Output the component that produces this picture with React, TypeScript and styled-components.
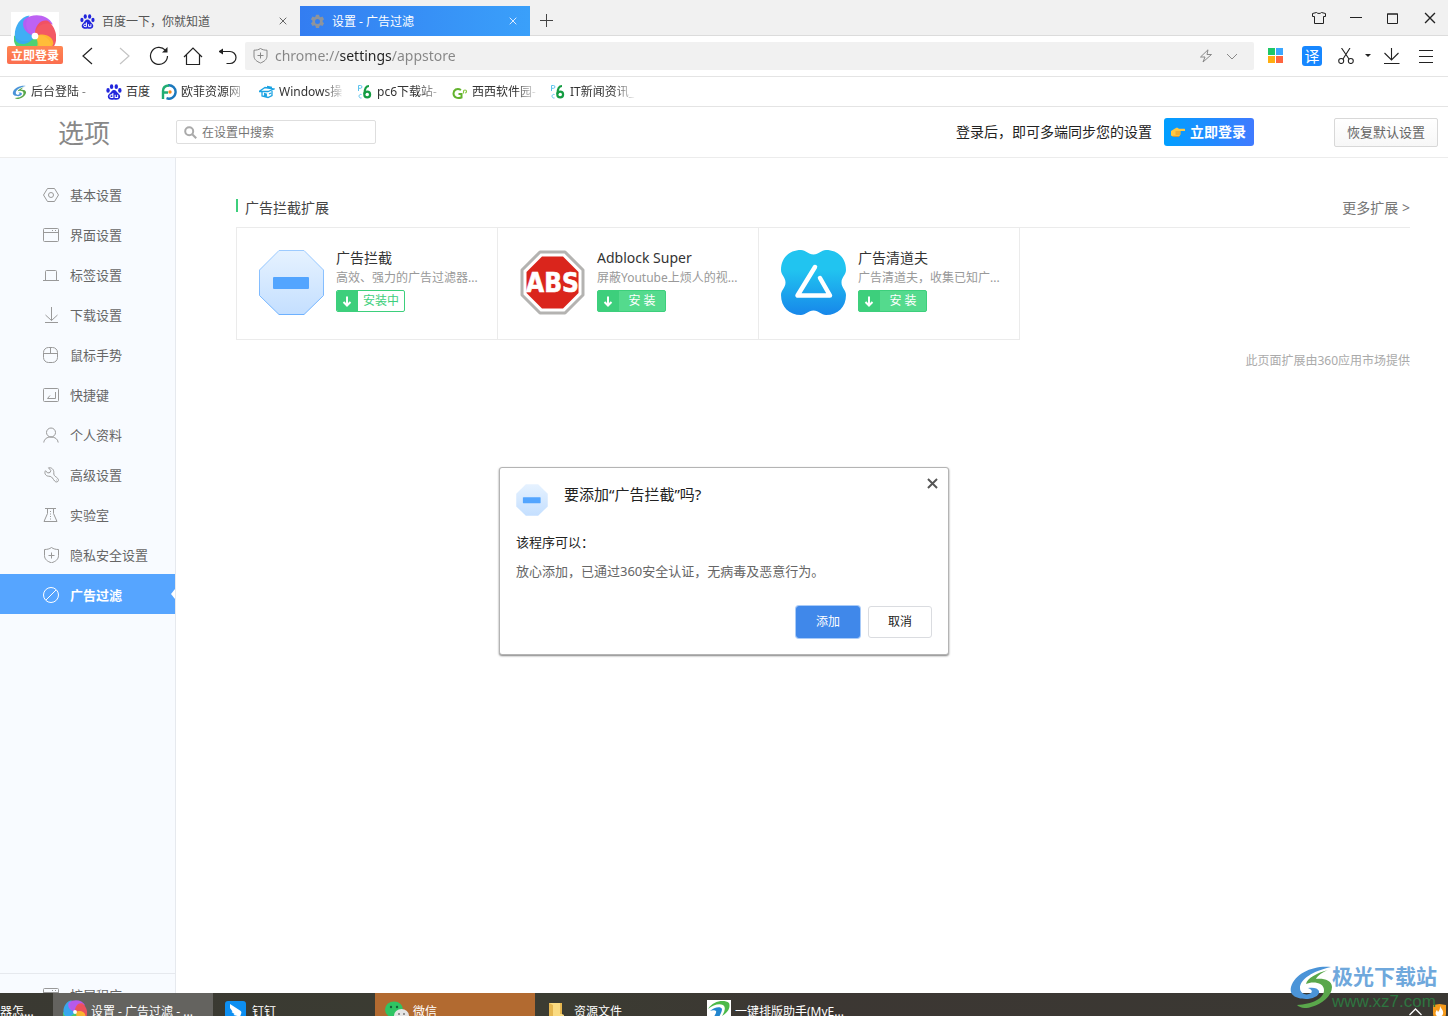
import React from "react";
import styled, { createGlobalStyle, css } from "styled-components";

const GlobalStyle = createGlobalStyle`
  *, *::before, *::after { box-sizing: border-box; }
  body {
    margin: 0;
    background: #fff;
    color: #333;
    font-family: "Noto Sans", "Noto Sans CJK SC", sans-serif;
    font-size: 12px;
    line-height: 20px;
  }
  button, input { font: inherit; color: inherit; margin: 0; padding: 0; border: 0; background: none; }
  button { cursor: pointer; white-space: nowrap; }
  a { color: inherit; text-decoration: none; }
  h1, h2, h3, p, ul { margin: 0; padding: 0; font-weight: 400; }
  ul { list-style: none; }
  svg { display: block; flex: none; }
`;

/* ---------- browser chrome ---------- */

const Desktop = styled.div`
  position: relative;
  display: flex;
  flex-direction: column;
  height: 100vh;
  overflow: hidden;
`;

const Account = styled.button`
  position: absolute;
  top: 12px;
  left: 7px;
  width: 56px;
  display: flex;
  flex-direction: column;
  align-items: center;
`;

const Portrait = styled.span`
  display: flex;
  justify-content: center;
  width: 48px;
  height: 34px;
  padding-top: 3px;
  overflow: hidden;
  background: #fff;
`;

const AccountLabel = styled.span`
  width: 100%;
  height: 18px;
  border-radius: 2px;
  background: linear-gradient(#ff8652, #fb6e4f);
  color: #fff;
  font-weight: 700;
  line-height: 19px;
`;

const TabStrip = styled.div`
  flex: none;
  display: flex;
  align-items: flex-end;
  height: 36px;
  padding-left: 70px;
  background: #f1f1f1;
  box-shadow: inset 0 -1px #dcdcdc;
`;

const Tab = styled.div<{ $active?: boolean }>`
  display: flex;
  align-items: center;
  width: 230px;
  height: 30px;
  padding: 0 11px 0 10px;
  gap: 7px;
  color: #555;
  ${(p) =>
    p.$active &&
    css`
      color: #fff;
      background: linear-gradient(90deg, #337df1, #3aa0fa);
    `}
`;

const TabTitle = styled.span`
  flex: 1;
  padding-top: 2px;
`;

const IconButton = styled.button<{ $w?: number; $color?: string }>`
  display: flex;
  align-items: center;
  justify-content: center;
  flex: none;
  width: ${(p) => p.$w ?? 34}px;
  height: 28px;
  color: ${(p) => p.$color ?? "#222"};
`;

const NewTab = styled(IconButton)`
  height: 32px;
`;

const WindowButtons = styled.div`
  display: flex;
  align-items: center;
  align-self: flex-start;
  height: 36px;
  margin-left: auto;
`;

const Toolbar = styled.div`
  flex: none;
  display: flex;
  align-items: center;
  height: 41px;
  padding: 0 8px 1px 70px;
  border-bottom: 1px solid #e4e4e4;
`;

const AddressBar = styled.div`
  flex: 1;
  display: flex;
  align-items: center;
  height: 28px;
  padding: 0 9px 0 8px;
  border-radius: 2px;
  background: #f1f1f1;
`;

const AddressInput = styled.input`
  flex: 1;
  min-width: 0;
  height: 28px;
  margin-left: 7px;
  font-size: 14px;
  outline: none;
  background: linear-gradient(90deg, #858585 64px, #222 64px, #222 117px, #858585 117px);
  background-clip: text;
  -webkit-background-clip: text;
  -webkit-text-fill-color: transparent;
`;

const Translate = styled.button`
  flex: none;
  width: 20px;
  height: 20px;
  margin: 0 7px 0 5px;
  border-radius: 3px;
  background: #1787ff;
  color: #fff;
  font-size: 15px;
  line-height: 20px;
`;

const Bookmarks = styled.nav`
  flex: none;
  display: flex;
  align-items: center;
  gap: 11px;
  height: 30px;
  padding-left: 11px;
  border-bottom: 1px solid #e4e4e4;
`;

const Bookmark = styled.a`
  display: flex;
  align-items: center;
  gap: 4px;
`;

const BookmarkText = styled.span<{ $w: number }>`
  width: ${(p) => p.$w}px;
  overflow: hidden;
  white-space: nowrap;
  color: #333;
  ${(p) =>
    p.$w > 30 &&
    css`
      mask-image: linear-gradient(90deg, #000 44px, transparent 66px);
    `}
`;

/* ---------- settings page ---------- */

const Header = styled.header`
  flex: none;
  display: flex;
  align-items: center;
  height: 51px;
  padding-right: 10px;
  border-bottom: 1px solid #ececec;
`;

const PageTitle = styled.h1`
  width: 176px;
  padding: 2px 0 0 58px;
  color: #888;
  font-size: 26px;
  line-height: 36px;
`;

const SearchBox = styled.label`
  display: flex;
  align-items: center;
  gap: 5px;
  width: 200px;
  height: 24px;
  padding: 0 7px;
  border: 1px solid #dedede;
  border-radius: 2px;
`;

const SearchInput = styled.input`
  flex: 1;
  min-width: 0;
  padding-top: 2px;
  outline: none;
  &::placeholder { color: #757575; opacity: 1; }
`;

const SyncHint = styled.p`
  margin-left: auto;
  color: #222;
  font-size: 14px;
`;

const LoginButton = styled.button`
  display: flex;
  align-items: center;
  gap: 5px;
  height: 28px;
  margin: 0 80px 0 12px;
  padding: 0 8px 0 7px;
  border-radius: 3px;
  background: linear-gradient(90deg, #009fff, #407aff);
  color: #fff;
  font-size: 14px;
  font-weight: 700;
`;

const ResetButton = styled.button`
  height: 29px;
  padding: 0 12px;
  border: 1px solid #d8d8d8;
  border-radius: 2px;
  background: linear-gradient(#fff, #f7f7f7);
  color: #666;
  font-size: 13px;
`;

const Body = styled.div`
  position: relative;
  flex: 1;
  display: flex;
  min-height: 0;
`;

const Sidebar = styled.nav`
  flex: none;
  display: flex;
  flex-direction: column;
  width: 176px;
  padding-top: 16px;
  border-right: 1px solid #e6e9ee;
  background: #f8fbff;
`;

const SideLink = styled.a<{ $active?: boolean }>`
  position: relative;
  display: flex;
  align-items: center;
  gap: 11px;
  height: 40px;
  padding: 2px 0 0 43px;
  color: #666;
  font-size: 13px;
  svg { color: #999; }
  ${(p) =>
    p.$active &&
    css`
      background: #56a5ff;
      color: #fff;
      font-weight: 700;
      svg { color: #fff; }
      &::after {
        content: "";
        position: absolute;
        top: 15px;
        right: 0;
        border: 5px solid transparent;
        border-left-width: 0;
        border-right: 4px solid #fff;
      }
    `}
`;

const SideFooter = styled.div`
  height: 20px;
  margin-top: auto;
  overflow: hidden;
  border-top: 1px solid #e6e9ee;
`;

const Main = styled.main`
  flex: 1;
  min-width: 0;
  padding: 40px 38px 0 60px;
`;

const SectionHead = styled.div`
  display: flex;
  align-items: flex-start;
  height: 29px;
  font-size: 14px;
  color: #444;
  &::before {
    content: "";
    width: 2px;
    height: 13px;
    margin: 1px 7px 0 0;
    background: #3dcf7c;
  }
`;

const SectionTitle = styled.h2`
  flex: 1;
  font-size: 14px;
`;

const MoreLink = styled.a`
  color: #777;
`;

const Cards = styled.ul`
  display: flex;
  border-top: 1px solid #ebebeb;
`;

const Card = styled.li`
  display: flex;
  gap: 12px;
  width: 261px;
  height: 112px;
  padding: 20px 0 0 22px;
  border: solid #ebebeb;
  border-width: 0 0 1px 1px;
  &:last-child { width: 262px; border-right-width: 1px; }
  > svg { margin-top: 2px; }
`;

const CardTitle = styled.h3`
  color: #333;
  font-size: 14px;
`;

const CardText = styled.p`
  color: #999;
  white-space: nowrap;
`;

const InstallButton = styled.button<{ $busy?: boolean }>`
  display: flex;
  width: 69px;
  height: 22px;
  margin-top: 2px;
  overflow: hidden;
  border: 1px solid #3dcf7c;
  border-radius: 2px;
  background: ${(p) => (p.$busy ? "#fff" : "#54da8d")};
  color: ${(p) => (p.$busy ? "#3dcf7c" : "#fff")};
  svg { background: #3dcf7c; }
`;

const InstallText = styled.span`
  flex: 1;
  text-align: center;
`;

const Source = styled.p`
  margin-top: 11px;
  color: #aaa;
  text-align: right;
`;

/* ---------- dialog ---------- */

const DialogLayer = styled.div`
  position: absolute;
  top: 309px;
  left: 0;
  right: 0;
  display: flex;
  justify-content: center;
`;

const DialogBox = styled.section`
  width: 450px;
  height: 188px;
  padding: 16px;
  border: 1px solid #b4b4b4;
  border-radius: 3px;
  background: #fff;
  box-shadow: 0 1px 2px rgba(0, 0, 0, 0.5);
`;

const DialogHead = styled.div`
  display: flex;
  gap: 16px;
  height: 48px;
`;

const DialogTitle = styled.h2`
  flex: 1;
  color: #222;
  font-size: 15px;
`;

const CloseButton = styled.button`
  display: flex;
  align-items: center;
  justify-content: center;
  width: 20px;
  height: 20px;
  margin: -11px -10px 0 0;
  color: #555;
`;

const DialogLead = styled.p`
  color: #222;
  font-size: 13px;
`;

const DialogText = styled.p`
  margin-top: 9px;
  color: #666;
  font-size: 13px;
`;

const DialogActions = styled.div`
  display: flex;
  justify-content: flex-end;
  gap: 8px;
  margin-top: 25px;
`;

const DialogButton = styled.button<{ $primary?: boolean }>`
  width: 64px;
  height: 32px;
  border: 1px solid ${(p) => (p.$primary ? "#4088ea" : "#dadce0")};
  border-radius: 3px;
  background: ${(p) => (p.$primary ? "#4088ea" : "#fff")};
  color: ${(p) => (p.$primary ? "#fff" : "#222")};
  box-shadow: ${(p) => (p.$primary ? "0 0 0 1px #a9cbf8" : "none")};
`;

/* ---------- taskbar and site mark ---------- */

const Taskbar = styled.footer`
  flex: none;
  display: flex;
  gap: 1px;
  height: 23px;
  overflow: hidden;
  background: linear-gradient(90deg, #3a3932, #3b3c32 38%, #3c3733 55%, #3a3833);
`;

const Task = styled.button<{ $bg?: string; $short?: boolean }>`
  flex: none;
  display: flex;
  align-items: center;
  gap: 4px;
  width: ${(p) => (p.$short ? 52 : 160)}px;
  height: 38px;
  padding-left: ${(p) => (p.$short ? 0 : 10)}px;
  background: ${(p) => p.$bg ?? "transparent"};
  color: #fff;
`;

const Tray = styled.div`
  display: flex;
  align-items: center;
  gap: 11px;
  height: 38px;
  margin-left: auto;
  padding-right: 2px;
`;

const SiteMark = styled.div`
  position: absolute;
  right: 11px;
  bottom: 4px;
  display: flex;
  align-items: center;
`;

const SiteName = styled.div`
  color: #6fa8dc;
  font-size: 21px;
  font-weight: 700;
  line-height: 32px;
`;

const SiteUrl = styled.div`
  color: #2e7540;
  font-family: "Liberation Sans", sans-serif;
  font-size: 17px;
  line-height: 20px;
`;

/* ---------- icons ---------- */

type LineProps = { size?: number; box?: number; w?: number; children: React.ReactNode };
const Line = ({ size = 16, box = size, w = 1, children }: LineProps) => (
  <svg width={size} height={size} viewBox={`0 0 ${box} ${box}`} fill="none" stroke="currentColor" strokeWidth={w} aria-hidden="true">
    {children}
  </svg>
);

const Cross = ({ size = 8, w = 1 }: { size?: number; w?: number }) => (
  <Line size={size} box={8} w={w}>
    <path d="M.7.7l6.6 6.6M7.3.7L.7 7.3" />
  </Line>
);

const Paw = ({ size = 14 }: { size?: number }) => (
  <svg width={size} height={size} viewBox="0 0 14 14" aria-hidden="true">
    <g fill="#2226dc">
      <ellipse cx="4.9" cy="2.3" rx="1.5" ry="2.1" />
      <ellipse cx="9" cy="2.3" rx="1.5" ry="2.1" />
      <ellipse cx="1.8" cy="5.6" rx="1.5" ry="2" />
      <ellipse cx="12.1" cy="5.6" rx="1.5" ry="2" />
      <path d="M7 5.200c1.900 0 2.400 1.800 3.600 2.900 1.400 1.200 2.200 2.300 1.600 4-.6 1.600-2.300 1.900-5.200 1.500-2.900.4-4.600.1-5.200-1.500-.6-1.700.2-2.800 1.600-4C4.600 7 5.100 5.200 7 5.200z" />
    </g>
    <path d="M6 7.800v4H4.600a1.100 1.100 0 010-2.300H6M8 9.500v2.300h2.200V9.500" fill="none" stroke="#fff" strokeWidth=".9" />
  </svg>
);

const petals = ["#46cf6b", "#36aaf4", "#b95af2", "#f2505c", "#ffb92e"];
const Pinwheel = ({ size }: { size: number }) => (
  <svg width={size} height={size} viewBox="0 0 40 40" aria-hidden="true">
    {petals.map((c, i) => (
      <path
        key={c}
        d="M20 20C11 18 6 10 10 4c8-6 22-5 27 5-9-3-17 2-17 11z"
        fill={c}
        opacity=".95"
        transform={`rotate(${i * 72 - 144} 20 20)`}
      />
    ))}
    <circle cx="20" cy="20" r="3.200" fill="#fff" />
  </svg>
);

const Octagon = ({ size }: { size: number }) => (
  <svg width={size} height={size} viewBox="0 0 65 65" aria-hidden="true">
    <defs>
      <linearGradient id={`oct${size}`} x2="0" y2="1">
        <stop stopColor="#e6f2ff" />
        <stop offset="1" stopColor="#c4dfff" />
      </linearGradient>
      <linearGradient id={`edge${size}`} x2="0" y2="1">
        <stop stopColor="#9dcbff" />
        <stop offset="1" stopColor="#6db1ff" />
      </linearGradient>
    </defs>
    <path d="M20 .5h25L64.500 20v25.500L45 64.500H20L.5 45.500V20z" fill={`url(#oct${size})`} stroke={size > 40 ? `url(#edge${size})` : "none"} />
    <rect x="14" y="27" width="36" height="12" rx="1" fill="#53a5ff" />
  </svg>
);

const StopSign = () => (
  <svg width="65" height="65" viewBox="0 0 65 65" aria-hidden="true">
    <path d="M20 2h25l18 18v25L45 63H20L2 45V20z" fill="#fff" stroke="#b4b3b1" strokeWidth="3" strokeLinejoin="round" />
    <path d="M22 6.500h21L58.500 22v21L43 58.500H22L6.500 43V22z" fill="#da251c" />
    <text x="32.500" y="42" textAnchor="middle" fontFamily="Liberation Sans Narrow, DejaVu Sans Condensed, sans-serif" fontWeight="700" fontSize="26" fill="#fff" stroke="#fff" strokeWidth=".6">
      ABS
    </text>
  </svg>
);

const Sweeper = () => (
  <svg width="65" height="65" viewBox="0 0 65 65" aria-hidden="true">
    <defs>
      <linearGradient id="sweep" x2="0" y2="1">
        <stop offset=".3" stopColor="#21c4f0" />
        <stop offset="1" stopColor="#1787ea" />
      </linearGradient>
    </defs>
    <path
      d="M20 0c5 0 7 4.500 12.500 4.500S40 0 45 0c12 0 20 8 20 20 0 5-4.500 7-4.500 12.500S65 40 65 45c0 12-8 20-20 20-5 0-7-4.500-12.500-4.500S25 65 20 65C8 65 0 57 0 45c0-5 4.500-7 4.500-12.500S0 25 0 20C0 8 8 0 20 0z"
      fill="url(#sweep)"
    />
    <path d="M34 17L16.500 45.500H49L39 28" fill="none" stroke="#fff" strokeWidth="4.500" strokeLinecap="round" strokeLinejoin="round" />
  </svg>
);

const Swoosh = ({ size, pad = 0 }: { size: number; pad?: number }) => (
  <svg width={size} height={size} viewBox={`${-pad} ${-pad} ${44 + pad * 2} ${44 + pad * 2}`} aria-hidden="true">
    <path d="M43 3C26 1 7 9 3 23c-2 9 6 12 17 12 7-1 12-4 11-8-1-3-6-4-11-3 3 1 5 3 3 5-4 3-11 1-11-5C12 15 25 7 43 3z" fill="#4b94d8" />
    <path d="M40 6C29 9 19 14 18 20c6-3 18-2 18 6 0 9-12 14-27 15 3 3 9 4 14 2 11-3 21-11 21-20 0-7-9-9-16-8 2-4 7-7 12-9z" fill="#5aa74b" />
  </svg>
);

const SmallMark = ({ kind }: { kind: string }) => {
  if (kind === "swoosh") return <Swoosh size={16} pad={3} />;
  if (kind === "paw") return <Paw size={16} />;
  if (kind === "ring")
    return (
      <svg width="16" height="16" viewBox="0 0 16 16" fill="none" aria-hidden="true">
        <path d="M7 1.300a6.700 6.700 0 11-1.500 12.900" stroke="#1b78bd" strokeWidth="2.400" />
        <path d="M2 15V7c0-3 2-5.300 6-5.500M3 8.500h4" stroke="#21ad74" strokeWidth="2.400" />
        <circle cx="9" cy="8" r="1.700" fill="#f58a1f" />
      </svg>
    );
  if (kind === "house")
    return (
      <svg width="16" height="16" viewBox="0 0 16 16" fill="none" stroke="#1ba2e2" strokeWidth="1.300" aria-hidden="true">
        <path d="M0 7.500L6 3.500l9 1.500-6 2.500zM3 8v4l6 1.500 4-2V7M5 9.500l3 .8M5 11l3 .8M10 10l2-1M8 2.500l5 1" />
      </svg>
    );
  if (kind === "leaf")
    return (
      <svg width="16" height="16" viewBox="0 0 16 16" fill="none" aria-hidden="true">
        <path d="M9 6C5 3.500 1.500 6 1.500 9.500S5 15 9.500 13.500V10H6.500" stroke="#63b32e" strokeWidth="2" />
        <path d="M11.500 9.500V7.500a1.500 1.500 0 111.500 1.500" stroke="#86c540" strokeWidth="1.200" />
      </svg>
    );
  return (
    <svg width="16" height="16" viewBox="0 0 16 16" fill="none" aria-hidden="true">
      <path d="M1.500 7V1.500h2a1.300 1.300 0 010 2.800h-2M4.500 10.500c-3-1-3.500 4 0 3.500" stroke="#5cc3ee" />
      <path d="M12 2C9 2 7.500 5 7.500 10" stroke="#149c42" strokeWidth="2.200" />
      <circle cx="10.200" cy="10.500" r="2.900" stroke="#149c42" strokeWidth="2.200" />
    </svg>
  );
};

const Gear = () => (
  <svg width="15" height="15" viewBox="0 0 24 24" fill="#8e949c" aria-hidden="true">
    <path
      fillRule="evenodd"
      d="M9.500 1h5l.6 3 2 1.100 2.900-1 2.500 4.300-2.300 2v2.400l2.300 2-2.500 4.300-2.900-1-2 1.200-.6 3h-5l-.6-3-2-1.200-2.900 1-2.500-4.300 2.300-2v-2.400l-2.300-2L4 4.100l2.900 1 2-1.100zM12 8a4 4 0 100 8 4 4 0 000-8z"
    />
  </svg>
);

const Shield = () => (
  <Line size={17}>
    <path d="M8.500 1.500C6.500 2.800 4.500 3.200 2 3.200V9c0 3.500 2.800 5.500 6.500 7C12.200 14.500 15 12.500 15 9V3.200c-2.500 0-4.500-.4-6.500-1.700zM8.500 5.500v6M5.500 8.500h6" />
  </Line>
);

const sideIcons: Record<string, React.ReactNode> = {
  hex: (
    <>
      <path d="M4.500 1.500h7L15.500 8l-4 6.500h-7L.5 8z" strokeLinejoin="round" />
      <circle cx="8" cy="8" r="2.500" />
    </>
  ),
  window: (
    <>
      <rect x=".5" y="1.500" width="15" height="13" rx="1" />
      <path d="M.5 5.500h15M9 3.500h1M12 3.500h1" />
    </>
  ),
  tab: <path d="M-.5 13.500h17M2.500 13.500v-9q0-1 1-1h9q1 0 1 1v9" />,
  down: <path d="M8.500 0v13.500M2.500 8l6 5.500 6-5.500M2 15.500h13" />,
  mouse: (
    <>
      <rect x=".5" y=".5" width="14" height="15" rx="5" />
      <path d="M.5 6.500h14M7.500.5v6" />
    </>
  ),
  key: (
    <>
      <rect x=".5" y="1.500" width="15" height="13" rx="1" />
      <path d="M12.500 5v6.500h-8M7 8.500l-2.500 3" />
    </>
  ),
  person: (
    <>
      <circle cx="8" cy="5.500" r="4.500" />
      <path d="M.8 15.500C1.200 12 4 10 8 10s6.800 2 7.200 5.500" />
    </>
  ),
  wrench: (
    <path d="M5.500.8l2.300 2.700L7 5.500l-2.300.5-2.200-2.300C1 6 2.500 9 5.500 9.200c2.700 0 3.500 1 5 3.300 1.500 2.500 3 3 4.300 2 1.200-1.200.7-2.700-1.300-4.200C11.500 9 10.500 8 10.800 5.500 11 2.500 8.500.2 5.500.8zM13 13h.6" />
  ),
  flask: (
    <>
      <path d="M2 1.500h11M4.500 1.500v5L1 14.500h13l-3.500-8v-5" />
      <path d="M7.500 4v9" strokeDasharray="1 1.500" />
    </>
  ),
  shield: <path d="M8.500.5C6.500 2 4 2.500 1.500 2.500v6c0 4 3 6 7 7.300 4-1.300 7-3.300 7-7.300v-6c-2.500 0-5-.5-7-2zM8.500 5.500v6M5.500 8.500h6" />,
  block: (
    <>
      <circle cx="8" cy="8" r="7.500" />
      <path d="M3 13L13 3" />
    </>
  ),
};

const PointingHand = () => (
  <svg width="14" height="10" viewBox="0 0 14 10" aria-hidden="true">
    <path d="M0 4L4 1.500 6 .5l2 1.300h5.500a.9.900 0 010 2.200H9.500v3.500L8 9.500H2L0 8.500z" fill="#ffc843" />
    <path d="M4.500 5h5M4.500 7h5M2 9.300h6" stroke="#d9932b" fill="none" />
  </svg>
);

/* ---------- data ---------- */

const bookmarks = [
  { text: "后台登陆 -", icon: "swoosh", w: 64 },
  { text: "百度", icon: "paw", w: 24 },
  { text: "欧菲资源网", icon: "ring", w: 67 },
  { text: "Windows操", icon: "house", w: 67 },
  { text: "pc6下载站-", icon: "pc6", w: 64 },
  { text: "西西软件园-", icon: "leaf", w: 67 },
  { text: "IT新闻资讯_", icon: "pc6", w: 67 },
];

const sideItems = [
  ["基本设置", "hex"],
  ["界面设置", "window"],
  ["标签设置", "tab"],
  ["下载设置", "down"],
  ["鼠标手势", "mouse"],
  ["快捷键", "key"],
  ["个人资料", "person"],
  ["高级设置", "wrench"],
  ["实验室", "flask"],
  ["隐私安全设置", "shield"],
  ["广告过滤", "block"],
];

const extensions = [
  { name: "广告拦截", text: "高效、强力的广告过滤器...", icon: <Octagon size={65} />, busy: true },
  { name: "Adblock Super", text: "屏蔽Youtube上烦人的视...", icon: <StopSign /> },
  { name: "广告清道夫", text: "广告清道夫，收集已知广...", icon: <Sweeper /> },
];

/* ---------- page ---------- */

export default function App() {
  return (
    <Desktop>
      <GlobalStyle />
      <TabStrip>
        <Tab>
          <Paw size={15} />
          <TabTitle>百度一下，你就知道</TabTitle>
          <IconButton $w={13} $color="#666" aria-label="关闭标签">
            <Cross />
          </IconButton>
        </Tab>
        <Tab $active>
          <Gear />
          <TabTitle>设置 - 广告过滤</TabTitle>
          <IconButton $w={13} $color="#dcebff" aria-label="关闭标签">
            <Cross />
          </IconButton>
        </Tab>
        <NewTab aria-label="新标签" $w={33} $color="#444">
          <Line size={13}>
            <path d="M6.500 0v13M0 6.500h13" />
          </Line>
        </NewTab>
        <WindowButtons>
          <IconButton $w={37} aria-label="皮肤">
            <Line size={14}>
              <path d="M4.500 1.500L.5 2.500v3h2v7h9v-7h2v-3l-4-1c-1 1.300-4 1.300-5 0z" />
            </Line>
          </IconButton>
          <IconButton $w={37} aria-label="最小化">
            <Line size={12}>
              <path d="M0 5.500h12" />
            </Line>
          </IconButton>
          <IconButton $w={37} aria-label="最大化">
            <Line size={11}>
              <path d="M.5 1h10v9.500H.5zM0 1h11" />
            </Line>
          </IconButton>
          <IconButton $w={37} aria-label="关闭">
            <Cross size={12} w={0.9} />
          </IconButton>
        </WindowButtons>
      </TabStrip>

      <Toolbar>
        <IconButton aria-label="后退">
          <Line size={18} w={1.2}>
            <path d="M14 1L5 9l9 8" />
          </Line>
        </IconButton>
        <IconButton $w={38} $color="#c4c4c4" aria-label="前进">
          <Line size={18} w={1.2}>
            <path d="M6 1l9 8-9 8" />
          </Line>
        </IconButton>
        <IconButton aria-label="刷新">
          <Line size={20} w={1.2}>
            <path d="M16.300 4.200A8.500 8.500 0 1018.500 10" />
            <path d="M18.500 1v5.500H13z" fill="currentColor" stroke="none" />
          </Line>
        </IconButton>
        <IconButton aria-label="主页">
          <Line size={20} w={1.2}>
            <path d="M1 11l9-9 9 9M3.500 9v9.500h13V9" />
          </Line>
        </IconButton>
        <IconButton $w={35} aria-label="恢复">
          <Line size={18} w={1.2}>
            <path d="M3 4.500h8a6 6 0 010 12H7.500" />
            <path d="M-1 4.500L4 1.500v6z" fill="currentColor" stroke="none" />
          </Line>
        </IconButton>
        <AddressBar>
          <IconButton $w={15} $color="#888" aria-label="网站安全">
            <Shield />
          </IconButton>
          <AddressInput aria-label="地址" defaultValue="chrome://settings/appstore" />
          <IconButton $w={26} $color="#888" aria-label="极速模式">
            <Line size={14}>
              <path d="M9 .8L1.500 8H6l-2 5L12.500 5.500H8z" strokeLinejoin="round" />
            </Line>
          </IconButton>
          <IconButton $w={26} $color="#888" aria-label="展开">
            <Line size={12}>
              <path d="M1 4l5 5 5-5" />
            </Line>
          </IconButton>
        </AddressBar>
        <IconButton $w={43} aria-label="应用">
          <svg width="15" height="15" viewBox="0 0 15 15" aria-hidden="true">
            <path fill="#1ec767" d="M0 0h7v7H0z" />
            <path fill="#3ba7ff" d="M8 0h7v7H8z" />
            <path fill="#ffae10" d="M0 8h7v7H0z" />
            <path fill="#ff653f" d="M8 8h7v7H8z" />
          </svg>
        </IconButton>
        <Translate aria-label="翻译">译</Translate>
        <IconButton aria-label="截图" $w={34}>
          <Line size={16} w={1.1}>
            <path d="M3.500 0l7.500 11M12 0L5 11" />
            <circle cx="3.200" cy="13" r="2.500" />
            <circle cx="12.800" cy="13" r="2.500" />
          </Line>
        </IconButton>
        <IconButton aria-label="截图选项" $w={9}>
          <svg width="6" height="3" viewBox="0 0 6 3" aria-hidden="true">
            <path d="M0 0h6L3 3z" fill="currentColor" />
          </svg>
        </IconButton>
        <IconButton aria-label="下载" $w={40}>
          <Line size={16} w={1.1}>
            <path d="M7.500 0v12M.5 5l7 7 7-7M0 15.500h15.500" />
          </Line>
        </IconButton>
        <IconButton aria-label="菜单" $w={28}>
          <Line size={14}>
            <path d="M0 1.500h14M0 7.500h14M0 13.500h14" />
          </Line>
        </IconButton>
      </Toolbar>

      <Bookmarks>
        {bookmarks.map((b) => (
          <Bookmark href="#" key={b.text}>
            <SmallMark kind={b.icon} />
            <BookmarkText $w={b.w}>{b.text}</BookmarkText>
          </Bookmark>
        ))}
      </Bookmarks>

      <Header>
        <PageTitle>选项</PageTitle>
        <SearchBox>
          <Line size={13} w={2}>
            <circle cx="5.200" cy="5.200" r="4" stroke="#aaa" />
            <path d="M8.200 8.200l4 4" stroke="#aaa" />
          </Line>
          <SearchInput placeholder="在设置中搜索" aria-label="在设置中搜索" />
        </SearchBox>
        <SyncHint>登录后，即可多端同步您的设置</SyncHint>
        <LoginButton>
          <PointingHand />
          立即登录
        </LoginButton>
        <ResetButton>恢复默认设置</ResetButton>
      </Header>

      <Body>
        <Sidebar>
          {sideItems.map(([text, icon]) => (
            <SideLink href="#" key={text} $active={icon === "block"}>
              <Line>{sideIcons[icon]}</Line>
              {text}
            </SideLink>
          ))}
          <SideFooter>
            <SideLink href="#">
              <Line>{sideIcons.window}</Line>
              扩展程序
            </SideLink>
          </SideFooter>
        </Sidebar>

        <Main>
          <SectionHead>
            <SectionTitle>广告拦截扩展</SectionTitle>
            <MoreLink href="#">更多扩展 &gt;</MoreLink>
          </SectionHead>
          <Cards>
            {extensions.map((e) => (
              <Card key={e.name}>
                {e.icon}
                <div>
                  <CardTitle>{e.name}</CardTitle>
                  <CardText>{e.text}</CardText>
                  <InstallButton $busy={e.busy}>
                    <Line size={21} w={2}>
                      <path d="M10 5.500v9M6.500 11l3.500 3.500 3.500-3.500" stroke="#fff" />
                    </Line>
                    <InstallText>{e.busy ? "安装中" : "安 装"}</InstallText>
                  </InstallButton>
                </div>
              </Card>
            ))}
          </Cards>
          <Source>此页面扩展由360应用市场提供</Source>
        </Main>

        <DialogLayer>
          <DialogBox role="dialog" aria-labelledby="add-title">
            <DialogHead>
              <Octagon size={32} />
              <DialogTitle id="add-title">要添加“广告拦截”吗?</DialogTitle>
              <CloseButton aria-label="关闭对话框">
                <Cross size={11} w={1.4} />
              </CloseButton>
            </DialogHead>
            <DialogLead>该程序可以：</DialogLead>
            <DialogText>放心添加，已通过360安全认证，无病毒及恶意行为。</DialogText>
            <DialogActions>
              <DialogButton $primary>添加</DialogButton>
              <DialogButton>取消</DialogButton>
            </DialogActions>
          </DialogBox>
        </DialogLayer>
      </Body>

      <Taskbar>
        <Task $short>器怎...</Task>
        <Task $bg="#64635f">
          <Pinwheel size={24} />
          设置 - 广告过滤 - ...
        </Task>
        <Task>
          <svg width="24" height="22" viewBox="0 0 24 22" aria-hidden="true">
            <rect x="1" width="21" height="22" rx="3" fill="#0d8ff2" />
            <path d="M6 3l10 6.500c2 1.300 1.500 2.500.5 5L13 19l.5-4-4-1 1-1-3-2 1-.5L6 7z" fill="#fff" />
          </svg>
          钉钉
        </Task>
        <Task $bg="#b26a30">
          <svg width="24" height="22" viewBox="0 0 24 22" aria-hidden="true">
            <ellipse cx="9" cy="8.500" rx="9" ry="8" fill="#2fc463" />
            <circle cx="6" cy="6" r="1.200" fill="#17603a" />
            <circle cx="12" cy="6" r="1.200" fill="#17603a" />
            <ellipse cx="16.500" cy="14.500" rx="7.500" ry="6.500" fill="#e4e4e4" />
            <circle cx="14" cy="13" r="1" fill="#777" />
            <circle cx="19" cy="13" r="1" fill="#777" />
          </svg>
          微信
        </Task>
        <Task>
          <svg width="24" height="18" viewBox="0 0 24 18" aria-hidden="true">
            <path d="M3 0h13v11l2 1v6H3z" fill="#fadb81" />
            <path d="M3 0l4 2v16H3zM14 0h2v11h-2z" fill="#e5b64f" />
          </svg>
          资源文件
        </Task>
        <Task>
          <svg width="24" height="24" viewBox="0 0 24 24" aria-hidden="true">
            <path fill="#fff" d="M0 0h24v24H0z" />
            <path d="M1 9C6 1 17-1 22 3c2 5-2 10-7 13 3-5 4-9 1-11C12 3 6 5 1 9z" fill="#4cb94a" />
            <path d="M3 11c4-4 11-5 12-2 0 4-4 8-4 13H5c1-5 5-9 4-11-1-1-4-1-6 0z" fill="#2386ce" />
          </svg>
          一键排版助手(MyE...
        </Task>
        <Tray>
          <IconButton $w={13} $color="#fff" aria-label="显示隐藏的图标">
            <Line size={13} w={1.3}>
              <path d="M.5 9l6-6 6 6" />
            </Line>
          </IconButton>
          <svg width="13" height="16" viewBox="0 0 13 16" aria-hidden="true">
            <path d="M0 1l6.500-1L13 1v9c0 3-3 5-6.500 6C3 15 0 13 0 10z" fill="#f59a1b" />
            <path d="M7 2c1 3 4 4 3 8-1 3-5 4-7 1-1-2 0-4 1-5l1 2c2-2 2-4 2-6z" fill="#fff" />
          </svg>
        </Tray>
      </Taskbar>

      <Account>
        <Portrait>
          <Pinwheel size={42} />
        </Portrait>
        <AccountLabel>立即登录</AccountLabel>
      </Account>

      <SiteMark>
        <Swoosh size={44} />
        <div>
          <SiteName>极光下载站</SiteName>
          <SiteUrl>www.xz7.com</SiteUrl>
        </div>
      </SiteMark>
    </Desktop>
  );
}
